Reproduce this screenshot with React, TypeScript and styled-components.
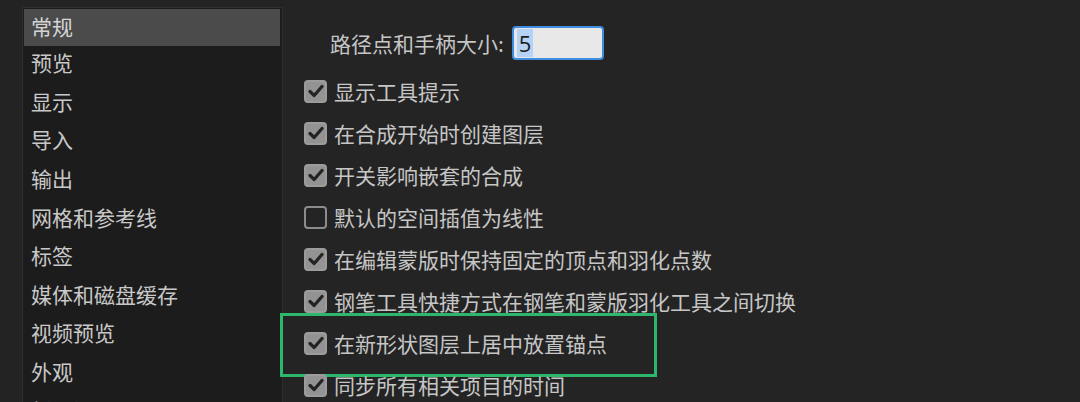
import styled, { createGlobalStyle } from "styled-components";

const GlobalStyle = createGlobalStyle`
  html, body {
    margin: 0;
    padding: 0;
    background: #232323;
  }
  body {
    font-family: "Noto Sans CJK SC", "Noto Sans", sans-serif;
    color: #c6c6c6;
  }
`;

const Page = styled.div`
  display: flex;
  height: 402px;
  overflow: hidden;
  background: #232323;
`;

const Sidebar = styled.ul`
  list-style: none;
  margin: 7px 0 0 22px;
  padding: 1px 2px 0 1px;
  width: 256px;
  height: 420px;
  background: #1c1c1c;
  border: 1px solid #2e2e2e;
  box-sizing: content-box;
`;

const NavItem = styled.li<{ $active?: boolean }>`
  box-sizing: border-box;
  height: ${(p) => (p.$active ? "37px" : "38.6px")};
  display: flex;
  align-items: center;
  padding: 0 0 ${(p) => (p.$active ? "3px" : "6px")} 7px;
  font-size: 21px;
  color: ${(p) => (p.$active ? "#d4d4d4" : "#c8c8c8")};
  background: ${(p) => (p.$active ? "#4b4b4b" : "transparent")};
`;

const Main = styled.div`
  flex: 1;
  padding: 22px 0 0 21px;
  background: #242424;
`;

const FieldRow = styled.div`
  display: flex;
  align-items: center;
  height: 42px;
  margin-bottom: 6px;
  padding-left: 26px;
  gap: 8px;
`;

const Label = styled.span`
  font-size: 21px;
  color: #c6c6c6;
`;

const SizeInput = styled.div`
  width: 85px;
  height: 30px;
  background: #e8e8e8;
  border: 2px solid #3f8de0;
  border-radius: 4px;
  display: flex;
  align-items: center;
  padding-left: 3px;
`;

const Selected = styled.span`
  font-family: "Open Sans", "Noto Sans", sans-serif;
  font-size: 22px;
  line-height: 28px;
  color: #1c1c1c;
  background: #b4d3f7;
  padding: 0 2px;
`;

const CheckRow = styled.div<{ $highlight?: boolean }>`
  position: relative;
  display: flex;
  align-items: center;
  gap: 7px;
  height: 42px;
  font-size: 21px;
  color: #c6c6c6;

  ${(p) =>
    p.$highlight &&
    `
    &::after {
      content: "";
      position: absolute;
      left: -24px;
      top: -9px;
      width: 371px;
      height: 58px;
      border: 3px solid #2db76c;
      pointer-events: none;
    }
  `}
`;

const Box = styled.span<{ $checked?: boolean }>`
  width: 23px;
  height: 23px;
  box-sizing: border-box;
  border-radius: 4px;
  flex: none;
  display: flex;
  align-items: center;
  justify-content: center;
  background: ${(p) => (p.$checked ? "#939393" : "transparent")};
  border: 2px solid ${(p) => (p.$checked ? "#9c9c9c" : "#8c8c8c")};
`;

const Check = () => (
  <svg width="16" height="14" viewBox="0 0 16 14">
    <path
      d="M2 7.5 L6.2 11.5 L14 2.5"
      fill="none"
      stroke="#232323"
      strokeWidth="3.2"
      strokeLinecap="round"
      strokeLinejoin="round"
    />
  </svg>
);

const navItems = [
  "常规",
  "预览",
  "显示",
  "导入",
  "输出",
  "网格和参考线",
  "标签",
  "媒体和磁盘缓存",
  "视频预览",
  "外观",
  "新预设",
];

const options = [
  { text: "显示工具提示", checked: true },
  { text: "在合成开始时创建图层", checked: true },
  { text: "开关影响嵌套的合成", checked: true },
  { text: "默认的空间插值为线性", checked: false },
  { text: "在编辑蒙版时保持固定的顶点和羽化点数", checked: true },
  { text: "钢笔工具快捷方式在钢笔和蒙版羽化工具之间切换", checked: true },
  { text: "在新形状图层上居中放置锚点", checked: true, highlight: true },
  { text: "同步所有相关项目的时间", checked: true },
];

export default function App() {
  return (
    <Page>
      <GlobalStyle />
      <Sidebar>
        {navItems.map((item, i) => (
          <NavItem key={item} $active={i === 0}>
            {item}
          </NavItem>
        ))}
      </Sidebar>
      <Main>
        <FieldRow>
          <Label>路径点和手柄大小:</Label>
          <SizeInput>
            <Selected>5</Selected>
          </SizeInput>
        </FieldRow>
        {options.map((o) => (
          <CheckRow key={o.text} $highlight={o.highlight}>
            <Box $checked={o.checked}>{o.checked && <Check />}</Box>
            {o.text}
          </CheckRow>
        ))}
      </Main>
    </Page>
  );
}
